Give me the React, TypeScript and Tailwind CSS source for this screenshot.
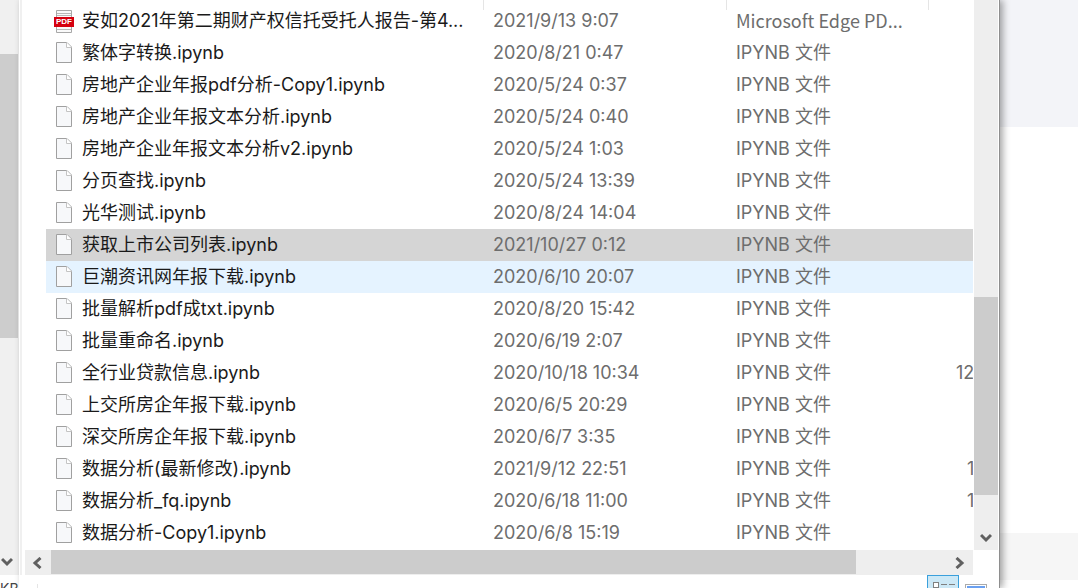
import {FC} from 'react';

type FileRow = {
  name: string;
  date: string;
  type: string;
  typeClass?: string;
  size?: string;
  sizeClass?: string;
  rowClass?: string;
  pdf?: boolean;
};

const rows: FileRow[] = [
  {name: '安如2021年第二期财产权信托受托人报告-第4...', date: '2021/9/13 9:07', type: 'Microsoft Edge PD...', typeClass: "-mt-[1px] font-['Noto_Sans_CJK_SC',sans-serif]", pdf: true},
  {name: '繁体字转换.ipynb', date: '2020/8/21 0:47', type: 'IPYNB 文件'},
  {name: '房地产企业年报pdf分析-Copy1.ipynb', date: '2020/5/24 0:37', type: 'IPYNB 文件'},
  {name: '房地产企业年报文本分析.ipynb', date: '2020/5/24 0:40', type: 'IPYNB 文件'},
  {name: '房地产企业年报文本分析v2.ipynb', date: '2020/5/24 1:03', type: 'IPYNB 文件'},
  {name: '分页查找.ipynb', date: '2020/5/24 13:39', type: 'IPYNB 文件'},
  {name: '光华测试.ipynb', date: '2020/8/24 14:04', type: 'IPYNB 文件'},
  {name: '获取上市公司列表.ipynb', date: '2021/10/27 0:12', type: 'IPYNB 文件', rowClass: 'bg-[#d5d5d5]'},
  {name: '巨潮资讯网年报下载.ipynb', date: '2020/6/10 20:07', type: 'IPYNB 文件', rowClass: 'bg-[#e5f3ff]'},
  {name: '批量解析pdf成txt.ipynb', date: '2020/8/20 15:42', type: 'IPYNB 文件'},
  {name: '批量重命名.ipynb', date: '2020/6/19 2:07', type: 'IPYNB 文件'},
  {name: '全行业贷款信息.ipynb', date: '2020/10/18 10:34', type: 'IPYNB 文件', size: '12', sizeClass: 'pl-[27px]'},
  {name: '上交所房企年报下载.ipynb', date: '2020/6/5 20:29', type: 'IPYNB 文件'},
  {name: '深交所房企年报下载.ipynb', date: '2020/6/7 3:35', type: 'IPYNB 文件'},
  {name: '数据分析(最新修改).ipynb', date: '2021/9/12 22:51', type: 'IPYNB 文件', size: '1', sizeClass: 'pl-[38px]'},
  {name: '数据分析_fq.ipynb', date: '2020/6/18 11:00', type: 'IPYNB 文件', size: '1', sizeClass: 'pl-[38px]'},
  {name: '数据分析-Copy1.ipynb', date: '2020/6/8 15:19', type: 'IPYNB 文件'},
];

const FileIcon: FC = () => (
  <svg width="18" height="23" viewBox="0 0 18 23" className="mt-[4px] block">
    <path d="M1.5 1.5H12L16.5 6V21.5H1.5Z" fill="#f7f8fa" stroke="#a0a0a0" />
    <path d="M11.5 1.5V6.5H16.5" fill="#fff" stroke="#c4c4c4" />
  </svg>
);

const PdfIcon: FC = () => (
  <div className="relative h-[32px] w-[20px]">
    <svg width="20" height="32" viewBox="0 0 20 32" className="block">
      <path d="M2.5 5.5H17.5V27.5H2.5Z" fill="#fafafa" stroke="#a8a8a8" />
      <path d="M3 8.5H17M3 10.5H17M3 24.5H17" stroke="#b8b8b8" />
    </svg>
    <span className="absolute left-0 top-[12px] flex h-[10px] w-[20px] items-center justify-center bg-[#d5000f] font-['Liberation_Sans',sans-serif] text-[8px] font-bold leading-none text-white">
      PDF
    </span>
  </div>
);

const Chevron: FC<{d: string}> = ({d}) => (
  <svg width="12" height="12" viewBox="0 0 12 12" className="block">
    <path d={d} fill="none" stroke="#606060" strokeWidth="3" />
  </svg>
);

const Row: FC<{row: FileRow}> = ({row}) => (
  <div className={`flex h-[32px] items-start text-[18px] leading-[32px] text-[#6d6d6d] ${row.rowClass ?? ''}`}>
    <div className="flex w-[36px] shrink-0 justify-center">{row.pdf ? <PdfIcon /> : <FileIcon />}</div>
    <div className="w-[411px] shrink-0 whitespace-nowrap text-[#1a1a1a]">{row.name}</div>
    <div className="w-[243px] shrink-0 whitespace-nowrap">{row.date}</div>
    <div className={`w-[193px] shrink-0 whitespace-nowrap ${row.typeClass ?? ''}`}>{row.type}</div>
    <div className={`min-w-0 flex-1 overflow-hidden whitespace-nowrap ${row.sizeClass ?? ''}`}>{row.size}</div>
  </div>
);

const App: FC = () => (
  <div className="flex h-[588px] w-[1078px] overflow-hidden bg-white font-['Inter','Noto_Sans_CJK_SC',sans-serif]">
    {/* scrollbar of the window behind, and the end of its status text */}
    <div className="flex h-[588px] w-[19px] shrink-0 flex-col overflow-hidden">
      <div className="flex h-[575px] shrink-0 flex-col bg-[#f0f0f0]">
        <div className="h-[54px]" />
        <div className="h-[284px] w-[18px] bg-[#cdcdcd]" />
        <div className="flex flex-1 items-end pb-[7px] pl-[1px]">
          <Chevron d="M1 3L6 8L11 3" />
        </div>
      </div>
      <span className="mt-[7px] whitespace-nowrap text-[14px] leading-[14px] text-[#444444]">KB</span>
    </div>

    <div className="relative z-10 flex w-[981px] shrink-0 flex-col border-r border-[#8e8e8e] bg-white shadow-[3px_0_7px_rgba(0,0,0,0.35)]">
      <div className="flex h-[575px]">
        <div className="w-[3px] shrink-0 border-r-2 border-[#f0f0f0]" />
        <div className="flex w-[977px] shrink-0 flex-col">
          <div className="flex h-[550px]">
            <div className="w-[951px] shrink-0 overflow-hidden pl-[24px]">
              <div className="relative z-10 flex h-[10px] bg-white">
                <div className="w-[438px] shrink-0 border-r border-[#e5e5e5]" />
                <div className="w-[243px] shrink-0 border-r border-[#e5e5e5]" />
                <div className="w-[202px] shrink-0 border-r border-[#e5e5e5]" />
              </div>
              <div className="-mt-[5px]">
                {rows.map(row => (
                  <Row key={row.name} row={row} />
                ))}
              </div>
            </div>
            <div className="ml-[1px] flex w-[24px] shrink-0 flex-col bg-[#eeeeee]">
              <div className="h-[297px]" />
              <div className="h-[198px] bg-[#cccccc]" />
              <div className="flex flex-1 items-end justify-center pb-[6px]">
                <Chevron d="M1 3L6 8L11 3" />
              </div>
            </div>
          </div>

          <div className="flex h-[25px] pl-[3px]">
            <div className="flex w-[948px] bg-[#eeeeee]">
              <div className="flex w-[26px] items-center justify-center">
                <Chevron d="M8.5 1L3 6L8.5 11" />
              </div>
              <div className="mb-[1px] w-[805px] bg-[#cccccc]" />
              <div className="flex flex-1 items-center justify-end pr-[8px]">
                <Chevron d="M3.5 1L9 6L3.5 11" />
              </div>
            </div>
          </div>
        </div>
      </div>

      <div className="flex h-[13px] items-start justify-between overflow-hidden pl-[18px]">
        <div className="mt-[9px] h-[4px] w-[1px] bg-[#e5e5e5]" />
        <div className="flex items-start gap-[6px] pr-[12px]">
          <div className="flex h-[20px] w-[32px] gap-[1px] border border-[#3aa0dc] bg-[#cce8f6] pl-[5px] pt-[6px]">
            <div className="h-[6px] w-[6px] border border-[#808080] bg-white" />
            <div className="ml-[1px] mt-[2px] h-[1px] w-[6px] bg-[#808080]" />
            <div className="ml-[1px] mt-[2px] h-[1px] w-[6px] bg-[#808080]" />
          </div>
          <div className="mt-[9px] h-[20px] w-[22px] border border-[#aaaaaa] bg-white p-[1px]">
            <div className="h-full bg-[#6aa0f0]" />
          </div>
        </div>
      </div>
    </div>

    {/* page behind the dialog */}
    <div className="flex min-w-0 flex-1 flex-col">
      <div className="h-[127px] bg-[#f3f4f8]" />
      <div className="h-[406px] bg-white" />
      <div className="h-[47px] bg-[#f6f6f6]" />
    </div>
  </div>
);

export default App;
